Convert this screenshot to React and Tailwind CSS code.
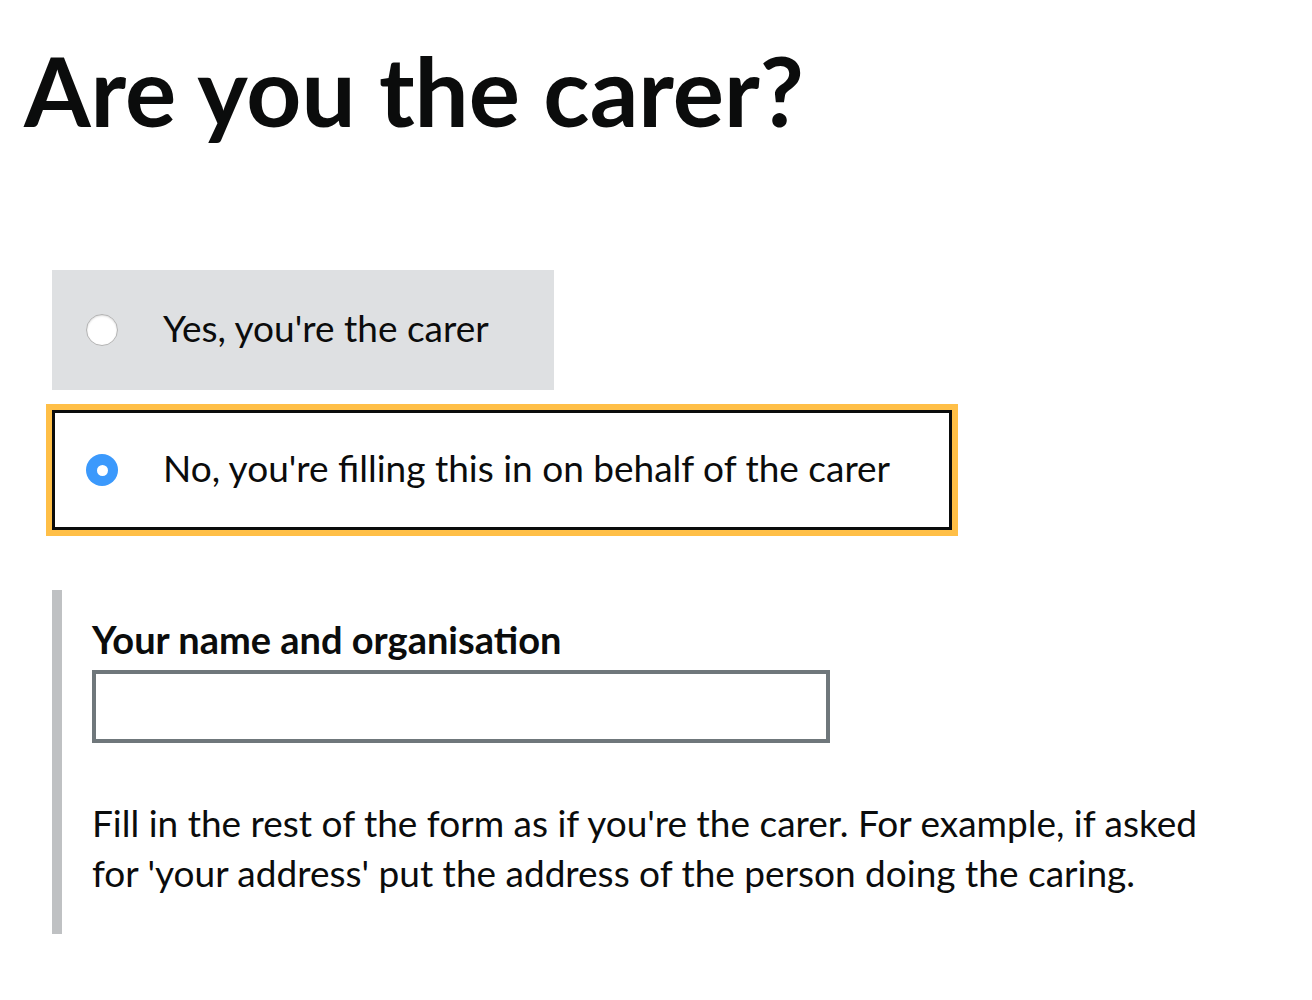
export default function App() {
  return (
    <div className="min-h-screen bg-white text-[#0b0c0c]" style={{ fontFamily: "Lato, 'Noto Sans', sans-serif" }}>
      <div className="pl-[24px] pt-[40px]">
        <h1 className="text-[96px] leading-[100px] font-bold">Are you the carer?</h1>
      </div>

      <div className="ml-[52px] mt-[130px]">
        {/* Radios */}
        <div className="flex flex-col items-start gap-[20px]">
          <label className="flex items-center h-[120px] bg-[#dee0e2] pl-[34px] pr-[65px]">
            <span className="w-[32px] h-[32px] rounded-full bg-white border border-[#b3b3b3] shadow-[inset_0_1px_2px_rgba(0,0,0,0.15)]"></span>
            <span className="ml-[45px] mb-[6px] text-[37px] leading-none">Yes, you're the carer</span>
          </label>
          <label className="flex items-center h-[120px] bg-white border-[3px] border-[#0b0c0c] outline-[6px] outline-solid outline-[#ffbf47] pl-[31px] pr-[59px]">
            <span className="w-[32px] h-[32px] rounded-full bg-[#3b99fc] flex items-center justify-center">
              <span className="w-[11px] h-[11px] rounded-full bg-white"></span>
            </span>
            <span className="ml-[45px] mb-[6px] text-[37px] leading-none">No, you're filling this in on behalf of the carer</span>
          </label>
        </div>

        {/* Conditional reveal */}
        <div className="mt-[60px] border-l-[10px] border-[#bfc1c3] pl-[30px] pt-[23px] pb-[36px]">
          <label className="block text-[38px] font-bold leading-[52px] mb-[5px]">Your name and organisation</label>
          <input type="text" className="block w-[738px] h-[73px] border-[4px] border-[#6f777b] px-2 text-[36px]" />
          <p className="mt-[55px] text-[37px] leading-[50px] max-w-[1120px]">
            Fill in the rest of the form as if you're the carer. For example, if asked for 'your address' put the address of the person doing the caring.
          </p>
        </div>
      </div>
    </div>
  );
}
